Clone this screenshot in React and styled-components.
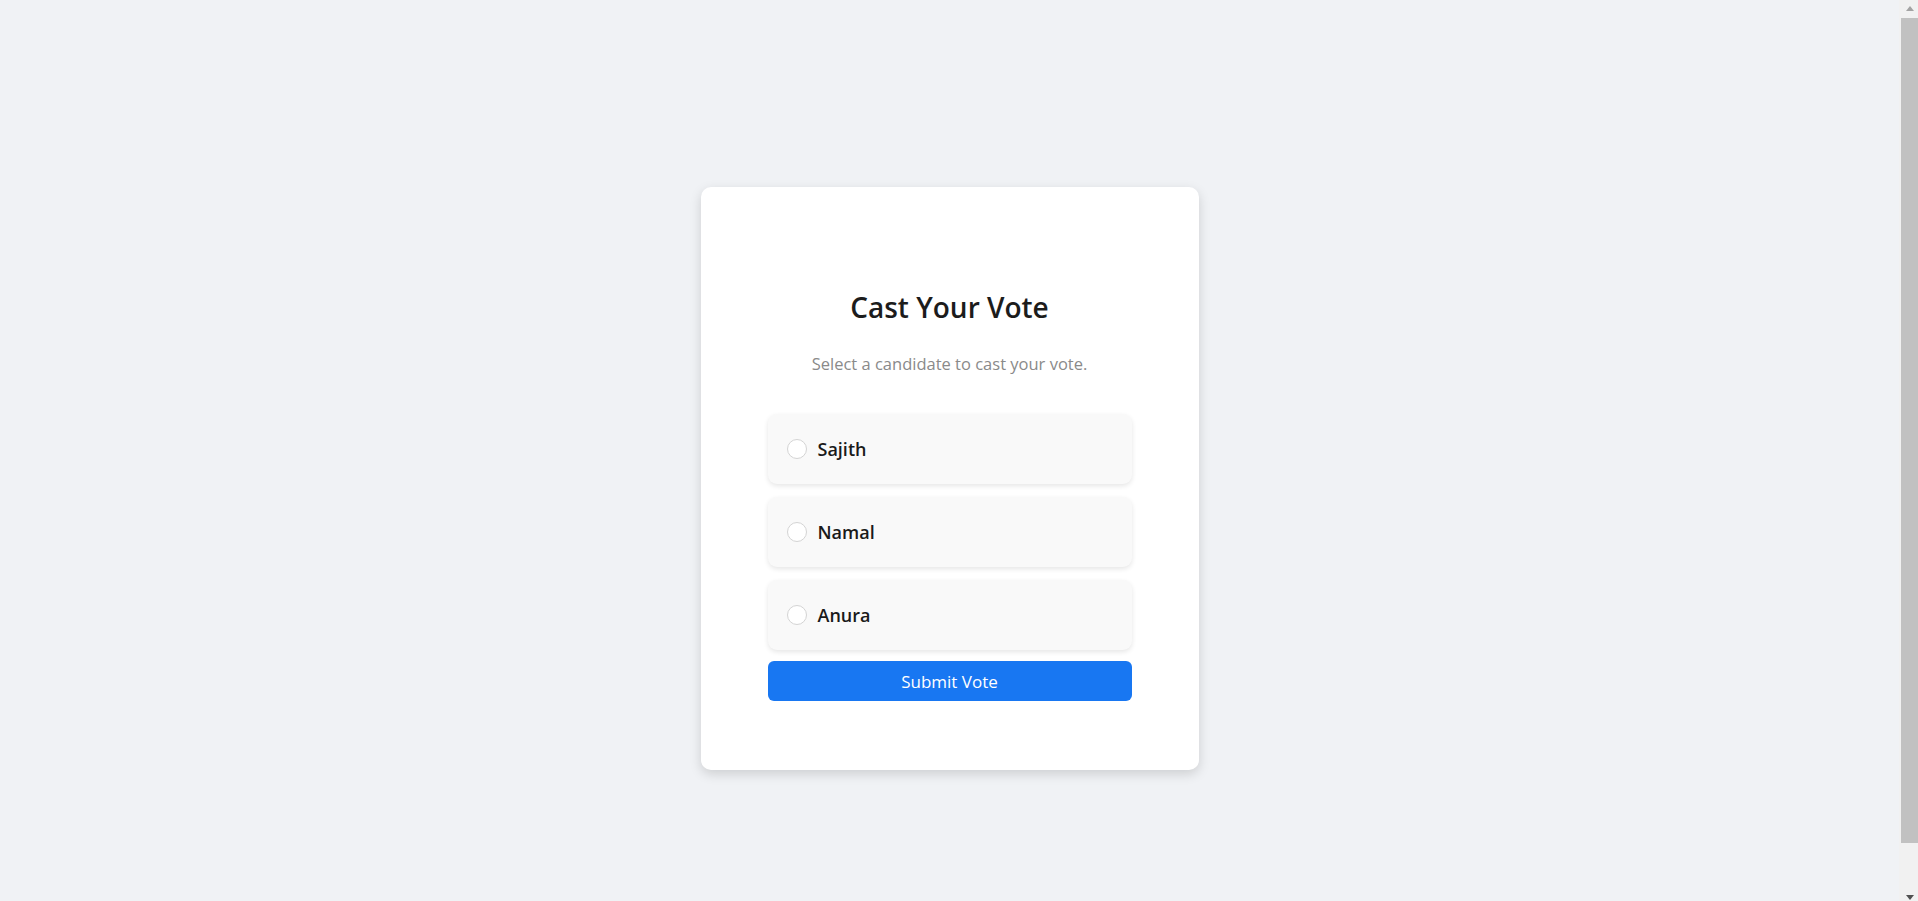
import React from "react";
import styled, { createGlobalStyle } from "styled-components";

const Global = createGlobalStyle`
  html, body { background: #f0f2f5; }
  body {
    margin: 0;
    font-family: "Open Sans", "Noto Sans", sans-serif;
    color: #1c1e21;
    overflow: hidden;
  }
`;

const Page = styled.div`
  height: 100vh;
  box-sizing: border-box;
  padding: 56px 19px 0 0;
  display: flex;
  align-items: center;
  justify-content: center;
`;

const Card = styled.div`
  width: 498px;
  box-sizing: border-box;
  background: #ffffff;
  border-radius: 10px;
  box-shadow: 0 4px 12px rgba(0, 0, 0, 0.15);
  padding: 102px 67px 69px;
  display: flex;
  flex-direction: column;
`;

const Title = styled.h2`
  margin: 0 0 28px;
  text-align: center;
  font-size: 28px;
  line-height: 36px;
  font-weight: 600;
  color: #1c1c1c;
`;

const Subtitle = styled.p`
  margin: 0 0 39px;
  text-align: center;
  font-size: 16.5px;
  line-height: 22px;
  color: #8a8a8a;
`;

const Options = styled.div`
  display: flex;
  flex-direction: column;
  gap: 13px;
`;

const Option = styled.label`
  display: flex;
  align-items: center;
  gap: 11px;
  height: 70px;
  box-sizing: border-box;
  padding: 0 19px;
  background: #f9f9f9;
  border-radius: 9px;
  box-shadow: 0 2px 5px rgba(0, 0, 0, 0.1);
  cursor: pointer;
`;

const Radio = styled.span`
  width: 20px;
  height: 20px;
  box-sizing: border-box;
  border-radius: 50%;
  border: 1px solid #d4d4d4;
  background: #ffffff;
  flex-shrink: 0;
`;

const Name = styled.span`
  font-size: 18px;
  font-weight: 600;
  color: #1a1a1a;
`;

const Submit = styled.button`
  margin-top: 11px;
  height: 40px;
  border: none;
  border-radius: 6px;
  background: #1877f2;
  color: #ffffff;
  font-family: inherit;
  font-size: 17px;
  cursor: pointer;
`;

const ScrollTrack = styled.div`
  position: fixed;
  top: 0;
  right: 0;
  width: 19px;
  height: 100vh;
  background: #f1f1f1;
`;

const ScrollThumb = styled.div`
  position: absolute;
  top: 18px;
  right: 0;
  width: 17px;
  height: 825px;
  background: #c1c1c1;
`;

const Arrow = styled.div`
  position: absolute;
  right: 4px;
  width: 0;
  height: 0;
  border-left: 4.5px solid transparent;
  border-right: 4.5px solid transparent;
  ${(p) =>
    p.$up
      ? `top: 6px; border-bottom: 5px solid #a3a3a3;`
      : `bottom: 1px; border-top: 5px solid #505050;`}
`;

const candidates = ["Sajith", "Namal", "Anura"];

export default function App() {
  return (
    <>
      <Global />
      <Page>
        <Card>
          <Title>Cast Your Vote</Title>
          <Subtitle>Select a candidate to cast your vote.</Subtitle>
          <Options>
            {candidates.map((c) => (
              <Option key={c}>
                <Radio />
                <Name>{c}</Name>
              </Option>
            ))}
          </Options>
          <Submit>Submit Vote</Submit>
        </Card>
      </Page>
      <ScrollTrack>
        <Arrow $up />
        <ScrollThumb />
        <Arrow />
      </ScrollTrack>
    </>
  );
}
